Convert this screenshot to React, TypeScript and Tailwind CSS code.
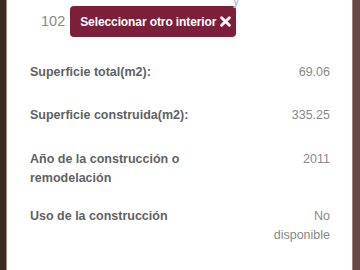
export default function App() {
  const rows: { label: string; value: string[]; gap: string }[] = [
    { label: "Superficie total(m2):", value: ["69.06"], gap: "mt-[26px]" },
    { label: "Superficie construida(m2):", value: ["335.25"], gap: "mt-[24px]" },
    { label: "Año de la construcción o remodelación", value: ["2011"], gap: "mt-[25px]" },
    { label: "Uso de la construcción", value: ["No", "disponible"], gap: "mt-[19px]" },
  ];

  return (
    <div className="flex h-[270px] w-[360px] overflow-hidden bg-[#6b4848] font-['Liberation_Sans',Arial,sans-serif]">
      <div className="w-[6px] shrink-0 bg-[#3b2a24]" />
      <div className="w-[1px] shrink-0 bg-[#b08a78]" />
      <div className="relative flex w-[345px] shrink-0 flex-col bg-white pl-[23px] pr-[22px]">
        <div className="absolute -top-[9px] left-[226px] text-[13px] text-[#bbb]">y</div>
        <div className="mt-[6px] flex items-center gap-[5px] pl-[11px]">
          <span className="text-[14.5px] text-[#888]">102</span>
          <div className="flex h-[31px] items-center gap-[4px] rounded-[4px] bg-[#7b1f3a] pl-[10px] pr-[5px] text-[12px] font-bold text-white">
            <span className="tracking-[-0.1px]">Seleccionar otro interior</span>
            <svg width="11" height="11" viewBox="0 0 10 10">
              <path d="M1.5 1.5 L8.5 8.5 M8.5 1.5 L1.5 8.5" stroke="white" strokeWidth="2.6" strokeLinecap="round" />
            </svg>
          </div>
        </div>
        {rows.map((r) => (
          <div key={r.label} className={`${r.gap} flex items-start justify-between text-[12.5px] leading-[19px]`}>
            <div className="w-[200px] font-bold text-[#5f6264]">{r.label}</div>
            <div className="text-right text-[#888]">
              {r.value.map((v) => (
                <div key={v}>{v}</div>
              ))}
            </div>
          </div>
        ))}
      </div>
      <div className="w-[1px] shrink-0 bg-[#a08070]" />
      <div className="flex-1 bg-[#6b4848]" />
    </div>
  );
}
